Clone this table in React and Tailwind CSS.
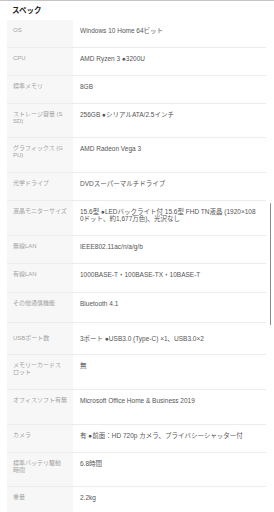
import React from "react";

const rows = [
  { h: "h-[28px]", label: "OS", value: "Windows 10 Home 64ビット" },
  { h: "h-[28px]", label: "CPU", value: "AMD Ryzen 3 ●3200U" },
  { h: "h-[28px]", label: "標準メモリ", value: "8GB" },
  { h: "h-[34px]", label: <>ストレージ容量 (S<br />SD)</>, value: "256GB ●シリアルATA/2.5インチ" },
  { h: "h-[35px]", label: <>グラフィックス (G<br />PU)</>, value: "AMD Radeon Vega 3" },
  { h: "h-[28px]", label: "光学ドライブ", value: "DVDスーパーマルチドライブ" },
  {
    h: "h-[35px]",
    label: "液晶モニターサイズ",
    value: <>15.6型 ●LEDバックライト付 15.6型 FHD TN液晶 (1920×108<br />0ドット、約1,677万色)、光沢なし</>,
  },
  { h: "h-[28px]", label: "無線LAN", value: "IEEE802.11ac/n/a/g/b" },
  { h: "h-[29px]", label: "有線LAN", value: "1000BASE-T・100BASE-TX・10BASE-T" },
  { h: "h-[30px]", label: "その他通信機能", value: "Bluetooth 4.1" },
  { h: "h-[32px]", label: "USBポート数", value: "3ポート ●USB3.0 (Type-C) ×1、USB3.0×2", pt: "pt-[11.5px]" },
  { h: "h-[35px]", label: <>メモリーカードス<br />ロット</>, value: "無" },
  { h: "h-[35px]", label: "オフィスソフト有無", value: "Microsoft Office Home & Business 2019" },
  { h: "h-[28px]", label: "カメラ", value: "有 ●前面：HD 720p カメラ、プライバシーシャッター付" },
  { h: "h-[34px]", label: <>標準バッテリ駆動<br />時間</>, value: "6.8時間" },
  { h: "h-[30px]", label: "重量", value: "2.2kg" },
];

export default function App() {
  return (
    <div className="relative w-[274px] h-[512px] overflow-hidden bg-white font-['Liberation_Sans','Noto_Sans_CJK_JP',sans-serif]">
      <div className="h-px bg-[#c4c4c4]" />
      <div className="h-[19px] flex items-center pl-[12px] text-[7.5px] font-bold text-[#222]">
        スペック
      </div>
      <div className="ml-[7px] w-[259px] flex flex-col">
        {rows.map((r, i) => (
          <div key={i} className={`flex ${r.h} border-b border-[#ececec]`}>
            <div className={`w-[66px] shrink-0 bg-[#f7f7f7] pl-[6px] ${r.pt || "pt-[7px]"} text-[6px] leading-[7px] text-[#a3a3a3]`}>
              {r.label}
            </div>
            <div className={`flex-1 pl-[7px] pr-[6px] ${r.pt || "pt-[7px]"} text-[6.5px] leading-[7px] text-[#555] whitespace-nowrap`}>
              {r.value}
            </div>
          </div>
        ))}
      </div>
      <div className="absolute left-[269.5px] top-[203px] w-[1.5px] h-[122px] bg-[#8a8a8a] rounded-full" />
    </div>
  );
}
